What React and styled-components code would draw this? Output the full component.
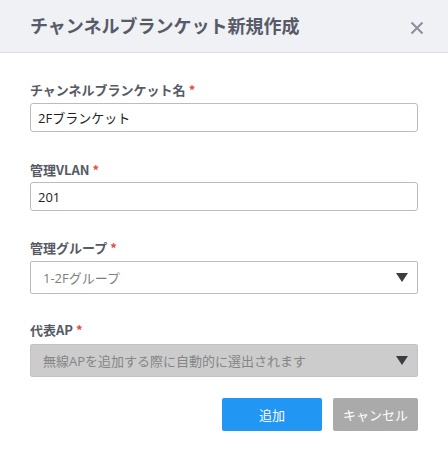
import React from "react";
import styled, { createGlobalStyle } from "styled-components";

const GlobalStyle = createGlobalStyle`
  html, body {
    margin: 0;
    padding: 0;
    background: #ffffff;
  }
  body {
    font-family: "Open Sans", "Noto Sans CJK JP", sans-serif;
  }
`;

const Dialog = styled.div`
  width: 448px;
  height: 451px;
  background: #ffffff;
  box-sizing: border-box;
`;

const Header = styled.div`
  height: 53px;
  box-sizing: border-box;
  background: #f0f1f5;
  border-bottom: 1px solid #dfe0e4;
  display: flex;
  align-items: center;
  justify-content: space-between;
  padding: 0 23px 0 30px;
`;

const Title = styled.h1`
  margin: 0;
  font-family: "Noto Sans CJK JP", sans-serif;
  font-size: 18px;
  font-weight: 700;
  color: #565b67;
  letter-spacing: 0;
  padding-bottom: 2px;
`;

const CloseButton = styled.button`
  border: none;
  background: transparent;
  padding: 0;
  width: 16px;
  height: 16px;
  margin-top: 4px;
  display: flex;
  align-items: center;
  justify-content: center;
  cursor: pointer;
`;

const Body = styled.div`
  padding: 27px 30px 0 30px;
`;

const Field = styled.div`
  margin-bottom: ${(p) => p.$gap}px;
`;

const Label = styled.div`
  font-family: "Noto Sans CJK JP", sans-serif;
  font-size: 13px;
  font-weight: 700;
  line-height: 20px;
  color: #565a63;
  margin-bottom: ${(p) => p.$gap}px;
`;

const Required = styled.span`
  color: #e74c3c;
  margin-left: 3px;
`;

const TextInput = styled.input`
  display: block;
  width: 100%;
  height: 29px;
  box-sizing: border-box;
  border: 1px solid #b9bcc2;
  border-radius: 3px;
  padding: 0 7px;
  font-family: "Open Sans", "Noto Sans CJK JP", sans-serif;
  font-size: 13px;
  color: #222;
  background: #fff;
  outline: none;
`;

const SelectBox = styled.div`
  height: 33px;
  box-sizing: border-box;
  border: 1px solid ${(p) => (p.$disabled ? "#c3c3c3" : "#b9bcc2")};
  border-radius: 2px;
  background: ${(p) => (p.$disabled ? "#cccccc" : "#ffffff")};
  display: flex;
  align-items: center;
  justify-content: space-between;
  padding: 0 9px 0 12px;
`;

const SelectText = styled.span`
  font-family: "Open Sans", "Noto Sans CJK JP", sans-serif;
  font-size: 13px;
  color: ${(p) => (p.$disabled ? "#858585" : "#808080")};
`;

const Arrow = styled.span`
  width: 0;
  height: 0;
  border-left: 6px solid transparent;
  border-right: 6px solid transparent;
  border-top: 9px solid #3c3d42;
`;

const Actions = styled.div`
  display: flex;
  justify-content: flex-end;
  gap: 11px;
`;

const Button = styled.button`
  height: 33px;
  width: ${(p) => p.$width}px;
  border: none;
  border-radius: 2px;
  background: ${(p) => (p.$primary ? "#2196f3" : "#aaaaaa")};
  color: #ffffff;
  font-family: "Noto Sans CJK JP", sans-serif;
  font-size: 13px;
  cursor: pointer;
`;

function Select({ value, disabled }) {
  return (
    <SelectBox $disabled={disabled}>
      <SelectText $disabled={disabled}>{value}</SelectText>
      <Arrow />
    </SelectBox>
  );
}

export default function App() {
  return (
    <Dialog>
      <GlobalStyle />
      <Header>
        <Title>チャンネルブランケット新規作成</Title>
        <CloseButton aria-label="close">
          <svg width="14" height="14" viewBox="0 0 14 14">
            <path d="M1.5 1.5 L12.5 12.5 M12.5 1.5 L1.5 12.5" stroke="#8b909c" strokeWidth="2" />
          </svg>
        </CloseButton>
      </Header>
      <Body>
        <Field $gap={28}>
          <Label $gap={3}>
            チャンネルブランケット名<Required>*</Required>
          </Label>
          <TextInput defaultValue="2Fブランケット" />
        </Field>
        <Field $gap={27}>
          <Label $gap={2}>
            管理VLAN<Required>*</Required>
          </Label>
          <TextInput defaultValue="201" />
        </Field>
        <Field $gap={26}>
          <Label $gap={3}>
            管理グループ<Required>*</Required>
          </Label>
          <Select value="1-2Fグループ" />
        </Field>
        <Field $gap={21}>
          <Label $gap={4}>
            代表AP<Required>*</Required>
          </Label>
          <Select value="無線APを追加する際に自動的に選出されます" disabled />
        </Field>
        <Actions>
          <Button $primary $width={100}>追加</Button>
          <Button $width={85}>キャンセル</Button>
        </Actions>
      </Body>
    </Dialog>
  );
}
